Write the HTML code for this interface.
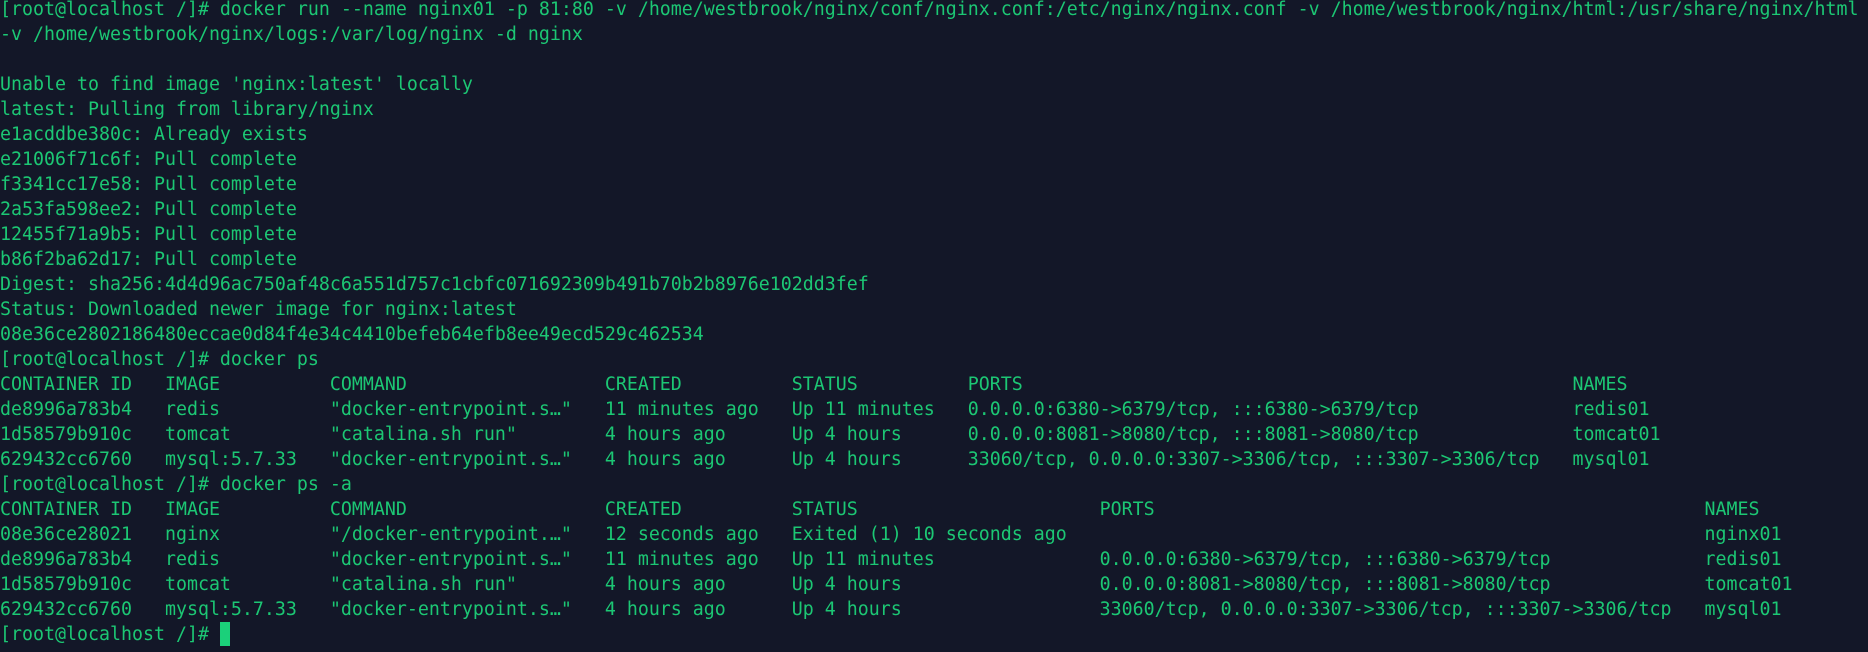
<!DOCTYPE html>
<html><head><meta charset="utf-8"><style>
html,body{margin:0;padding:0;background:#131728;}
body{width:1868px;height:652px;overflow:hidden;position:relative;}
pre{margin:0;position:absolute;left:0;top:-3px;font-family:"DejaVu Sans Mono","Liberation Mono",monospace;font-size:18.27px;line-height:25px;color:#1cc774;white-space:pre;}
.cur{position:absolute;left:220px;top:622px;width:10px;height:24px;background:#1bd07a;}
</style></head><body>
<pre>[root@localhost /]# docker run --name nginx01 -p 81:80 -v /home/westbrook/nginx/conf/nginx.conf:/etc/nginx/nginx.conf -v /home/westbrook/nginx/html:/usr/share/nginx/html
-v /home/westbrook/nginx/logs:/var/log/nginx -d nginx

Unable to find image 'nginx:latest' locally
latest: Pulling from library/nginx
e1acddbe380c: Already exists
e21006f71c6f: Pull complete
f3341cc17e58: Pull complete
2a53fa598ee2: Pull complete
12455f71a9b5: Pull complete
b86f2ba62d17: Pull complete
Digest: sha256:4d4d96ac750af48c6a551d757c1cbfc071692309b491b70b2b8976e102dd3fef
Status: Downloaded newer image for nginx:latest
08e36ce2802186480eccae0d84f4e34c4410befeb64efb8ee49ecd529c462534
[root@localhost /]# docker ps
CONTAINER ID   IMAGE          COMMAND                  CREATED          STATUS          PORTS                                                  NAMES
de8996a783b4   redis          "docker-entrypoint.s…"   11 minutes ago   Up 11 minutes   0.0.0.0:6380->6379/tcp, :::6380->6379/tcp              redis01
1d58579b910c   tomcat         "catalina.sh run"        4 hours ago      Up 4 hours      0.0.0.0:8081->8080/tcp, :::8081->8080/tcp              tomcat01
629432cc6760   mysql:5.7.33   "docker-entrypoint.s…"   4 hours ago      Up 4 hours      33060/tcp, 0.0.0.0:3307->3306/tcp, :::3307->3306/tcp   mysql01
[root@localhost /]# docker ps -a
CONTAINER ID   IMAGE          COMMAND                  CREATED          STATUS                      PORTS                                                  NAMES
08e36ce28021   nginx          "/docker-entrypoint.…"   12 seconds ago   Exited (1) 10 seconds ago                                                          nginx01
de8996a783b4   redis          "docker-entrypoint.s…"   11 minutes ago   Up 11 minutes               0.0.0.0:6380->6379/tcp, :::6380->6379/tcp              redis01
1d58579b910c   tomcat         "catalina.sh run"        4 hours ago      Up 4 hours                  0.0.0.0:8081->8080/tcp, :::8081->8080/tcp              tomcat01
629432cc6760   mysql:5.7.33   "docker-entrypoint.s…"   4 hours ago      Up 4 hours                  33060/tcp, 0.0.0.0:3307->3306/tcp, :::3307->3306/tcp   mysql01
[root@localhost /]# </pre>
<div class="cur"></div>
</body></html>
